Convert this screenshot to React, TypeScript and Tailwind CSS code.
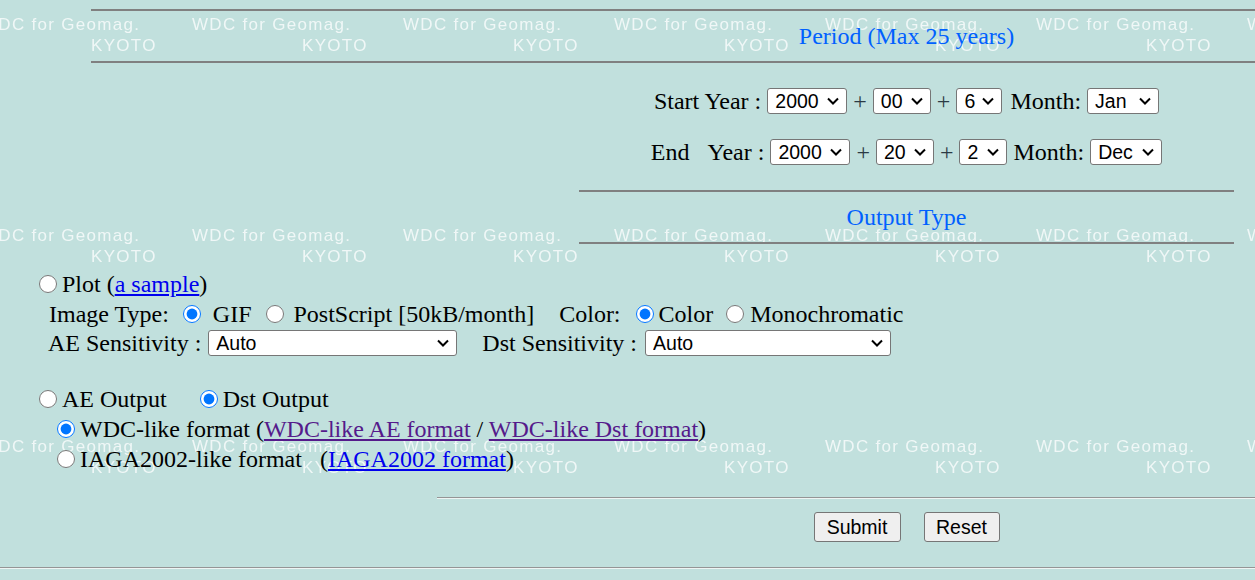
import React from "react";

const serif = "font-['Liberation_Serif','Times_New_Roman',serif]";
const sans = "font-['Liberation_Sans',Arial,sans-serif]";

function Sel({ className, value, options }: { className: string; value: string; options: string[] }) {
    return (
        <div className={"relative h-[26px] shrink-0 " + className}>
            <select
                defaultValue={value}
                className={"block appearance-none w-full h-full bg-white border border-[#767676] rounded-[3px] pl-[7px] pr-[22px] pt-[1px] text-[19.5px] leading-none text-black outline-none " + sans}
            >
                {options.map((o) => (
                    <option key={o}>{o}</option>
                ))}
            </select>
            <svg
                className="absolute right-[8px] top-1/2 -translate-y-1/2 pointer-events-none"
                width="12"
                height="8"
                viewBox="0 0 12 8"
            >
                <path d="M1 1.5 6 6.5 11 1.5" fill="none" stroke="black" strokeWidth="2" />
            </svg>
        </div>
    );
}

function Radio({ name, checked }: { name: string; checked?: boolean }) {
    return (
        <input
            type="radio"
            name={name}
            defaultChecked={checked}
            className="block w-[18px] h-[18px] m-0 shrink-0 accent-[#0075ff]"
        />
    );
}

function Watermark() {
    const tiles = Array.from({ length: 21 });
    return (
        <div className="absolute inset-0 overflow-hidden pointer-events-none">
            <div className="absolute top-0 left-[-19px] grid grid-cols-[repeat(7,211px)] grid-rows-[repeat(3,211px)]">
                {tiles.map((_, i) => (
                    <div key={i} className={"pt-[14px] leading-[21px] text-[17px] tracking-[1.3px] text-white/75 blur-[0.3px] whitespace-nowrap " + sans}>
                        <div>WDC for Geomag.</div>
                        <div className="pl-[110px]">KYOTO</div>
                    </div>
                ))}
            </div>
        </div>
    );
}

export default function App() {
    return (
        <div className={"relative w-full h-[580px] overflow-hidden bg-[#c1e0dd] text-[24px] text-black " + serif}>
            <Watermark />

            <div className="relative pt-[9px]">
                {/* Period header */}
                <div className="ml-[91px] h-[54px] border-y-2 border-[#808080] flex items-center">
                    <div className="ml-[488px] w-[655px] text-center text-[24px] text-[#0060ff]">Period (Max 25 years)</div>
                </div>

                <div className="ml-[579px] w-[655px]">
                    <div className="mt-[25px] h-[26px] flex items-center justify-center gap-[6px]">
                        <span>Start Year :</span>
                        <Sel className="w-[80px]" value="2000" options={["1900", "2000"]} />
                        <span className="text-[#2b3a44]">+</span>
                        <Sel className="w-[58px]" value="00" options={["00", "10", "20"]} />
                        <span className="text-[#2b3a44]">+</span>
                        <Sel className="w-[46px]" value="6" options={["0", "1", "2", "3", "4", "5", "6", "7", "8", "9"]} />
                        <span className="ml-[2px]">Month:</span>
                        <Sel className="w-[72px]" value="Jan" options={["Jan", "Feb", "Mar", "Dec"]} />
                    </div>

                    <div className="mt-[25px] h-[26px] flex items-center justify-center gap-[6px]">
                        <span>End&nbsp;&nbsp;&nbsp;Year :</span>
                        <Sel className="w-[80px]" value="2000" options={["1900", "2000"]} />
                        <span className="text-[#2b3a44]">+</span>
                        <Sel className="w-[58px]" value="20" options={["00", "10", "20"]} />
                        <span className="text-[#2b3a44]">+</span>
                        <Sel className="w-[48px]" value="2" options={["0", "1", "2", "3", "4", "5", "6", "7", "8", "9"]} />
                        <span>Month:</span>
                        <Sel className="w-[72px]" value="Dec" options={["Jan", "Feb", "Mar", "Dec"]} />
                    </div>

                    <div className="mt-[25px] h-[54px] border-y-2 border-[#808080] flex items-center justify-center text-[24px] text-[#0060ff]">
                        Output Type
                    </div>
                </div>

                {/* Output options */}
                <div className="ml-[39px] whitespace-nowrap">
                    <div className="mt-[24px] h-[31px] flex items-center">
                        <Radio name="kind" />
                        <span className="ml-[5px]">
                            Plot (<a href="#" className="text-[#0000ee] underline">a sample</a>)
                        </span>
                    </div>

                    <div className="h-[30px] pl-[10px] flex items-center">
                        <span>Image Type:</span>
                        <span className="ml-[14px]"><Radio name="img" checked /></span>
                        <span className="ml-[12px]">GIF</span>
                        <span className="ml-[14px]"><Radio name="img" /></span>
                        <span className="ml-[10px]">PostScript [50kB/month]</span>
                        <span className="ml-[25px]">Color:</span>
                        <span className="ml-[15px]"><Radio name="col" checked /></span>
                        <span className="ml-[5px]">Color</span>
                        <span className="ml-[13px]"><Radio name="col" /></span>
                        <span className="ml-[6px]">Monochromatic</span>
                    </div>

                    <div className="h-[28px] pl-[9px] flex items-center">
                        <span>AE Sensitivity :</span>
                        <Sel className="ml-[7px] w-[249px]" value="Auto" options={["Auto", "Fixed"]} />
                        <span className="ml-[25px]">Dst Sensitivity :</span>
                        <Sel className="ml-[8px] w-[246px]" value="Auto" options={["Auto", "Fixed"]} />
                    </div>

                    <div className="mt-[27px] h-[30px] flex items-center">
                        <Radio name="kind" />
                        <span className="ml-[5px]">AE Output</span>
                        <span className="ml-[33px]"><Radio name="idx" checked /></span>
                        <span className="ml-[5px]">Dst Output</span>
                    </div>

                    <div className="h-[30px] pl-[18px] flex items-center">
                        <Radio name="fmt" checked />
                        <span className="ml-[5px]">
                            WDC-like format (<a href="#" className="text-[#551a8b] underline">WDC-like AE format</a> /{" "}
                            <a href="#" className="text-[#551a8b] underline">WDC-like Dst format</a>)
                        </span>
                    </div>

                    <div className="h-[30px] pl-[18px] flex items-center">
                        <Radio name="fmt" />
                        <span className="ml-[5px]">
                            IAGA2002-like format&nbsp;&nbsp;&nbsp;(<a href="#" className="text-[#0000ee] underline">IAGA2002 format</a>)
                        </span>
                    </div>
                </div>

                <div className="mt-[23px] ml-[437px] border-t border-t-[#959595] border-b border-b-[#eef5f4]" />

                <div className="ml-[579px] w-[655px] mt-[13px] flex justify-center gap-[23px]">
                    <button className={"w-[87px] h-[30px] bg-[#efefef] border border-[#767676] rounded-[3px] text-[19.5px] text-black " + sans}>
                        Submit
                    </button>
                    <button className={"w-[76px] h-[30px] bg-[#efefef] border border-[#767676] rounded-[3px] text-[19.5px] text-black " + sans}>
                        Reset
                    </button>
                </div>

                <div className="mt-[25px] border-t border-t-[#959595] border-b border-b-[#eef5f4]" />
            </div>
        </div>
    );
}
